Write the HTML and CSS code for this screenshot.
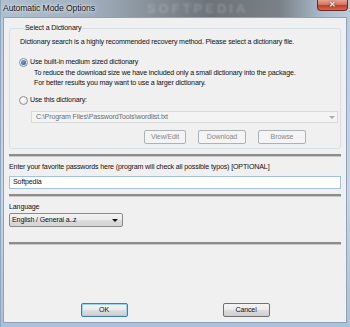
FILE: index.html
```html
<!DOCTYPE html>
<html lang="en">
<head>
  <meta charset="UTF-8" />
  <title>Automatic Mode Options</title>
  <link rel="stylesheet" href="styles.css">
</head>
<body>
  <div class="window">
    <div class="titlebar">
      <span class="title">Automatic Mode Options</span>
      <span class="watermark">SOFTPEDIA</span>
      <button class="close">&#x2715;</button>
    </div>

    <div class="client">
      <fieldset class="group">
        <legend>Select a Dictionary</legend>
        <p class="desc">Dictionary search is a highly recommended recovery method. Please select a dictionary file.</p>

        <label class="radio"><span class="dot checked"></span>Use built-in medium sized dictionary</label>
        <p class="note">To reduce the download size we have included only a small dictionary into the package.<br>For better results you may want to use a larger dictionary.</p>

        <label class="radio second"><span class="dot"></span>Use this dictionary:</label>
        <div class="combo">
          <span>C:\Program Files\PasswordTools\wordlist.txt</span>
          <span class="arrow small"></span>
        </div>

        <div class="btnrow">
          <button class="btn narrow" disabled>View/Edit</button>
          <button class="btn" disabled>Download</button>
          <button class="btn" disabled>Browse</button>
        </div>
      </fieldset>

      <hr class="sep">

      <p class="label">Enter your favorite passwords here (program will check all possible typos) [OPTIONAL]</p>
      <div class="textbox">Softpedia</div>

      <hr class="sep">

      <p class="label">Language</p>
      <div class="dropdown">
        <span>English / General a..z</span>
        <span class="arrow"></span>
      </div>

      <hr class="sep">

      <div class="footer">
        <button class="btn default">OK</button>
        <button class="btn">Cancel</button>
      </div>
    </div>
  </div>
</body>
</html>
```

FILE: styles.css
```css
* { box-sizing: border-box; }

body {
  margin: 0;
  width: 350px;
  height: 327px;
  overflow: hidden;
  font-family: 'Liberation Sans', Arial, sans-serif;
  font-size: 7.1px;
  letter-spacing: -0.15px;
  color: #111;
}

.window {
  width: 350px;
  height: 327px;
  display: flex;
  flex-direction: column;
  background: linear-gradient(to bottom, #b7cbe0, #c4d6e9 60%, #a9c1da);
  border-left: 1px solid #8fa6bf;
}

/* title bar */
.titlebar {
  height: 17px;
  flex: none;
  display: flex;
  align-items: flex-start;
  background: linear-gradient(to right, #aebfd0 0%, #a2b0be 25%, #838c95 45%, #6c7278 60%, #7a8187 80%, #a9bccd 92%, #b9cbdc 100%);
}

.title {
  font-size: 8.6px;
  letter-spacing: -0.1px;
  color: #111;
  padding: 3px 0 0 2px;
  text-shadow: 0 0 4px rgba(255,255,255,0.9), 0 0 2px rgba(255,255,255,0.8);
}

.watermark {
  margin-left: 52px;
  font-size: 13px;
  font-weight: bold;
  letter-spacing: 3px;
  color: rgba(225,225,225,0.25);
  filter: blur(1.2px);
  padding-top: 1px;
}

.close {
  margin-left: auto;
  margin-right: 2px;
  width: 31px;
  height: 11px;
  padding: 0;
  border: 1px solid #6b2a20;
  border-top: none;
  border-radius: 0 0 4px 4px;
  background: linear-gradient(to bottom, #e9a393 0%, #d9735f 45%, #c2402b 55%, #d56a4f 100%);
  color: #fff;
  font-size: 8px;
  font-weight: bold;
  line-height: 10px;
  text-shadow: 0 0 2px #3a0a00;
}

/* client area */
.client {
  flex: 1;
  margin: 0 3px 4px 2px;
  background: #f0f0f0;
  border: 1px solid #8ea3b8;
  padding: 5px 5px 0;
  display: flex;
  flex-direction: column;
}

p { margin: 0; line-height: 10px; }

.group {
  margin: 0;
  padding: 4px 2px 4px 10px;
  border: 1px solid #d5dfe5;
  border-radius: 3px;
}

.group legend {
  padding: 0 1px;
  margin-left: 4px;
  line-height: 10px;
}

.radio {
  display: flex;
  align-items: center;
  height: 10px;
  margin-top: 10px;
  margin-left: -1px;
  gap: 2px;
}

.radio.second { margin-top: 7px; }

.dot {
  width: 9px;
  height: 9px;
  border-radius: 50%;
  border: 1px solid #8e9396;
  background: radial-gradient(circle at 40% 35%, #fff, #dcdcdc);
  display: flex;
  align-items: center;
  justify-content: center;
}

.dot.checked::after {
  content: "";
  width: 5px;
  height: 5px;
  border-radius: 50%;
  background: radial-gradient(circle at 40% 35%, #6aa6e0, #1b4f8f);
}

.note {
  margin-top: 1px;
  padding-left: 14px;
}

.combo {
  margin: 6px 0 0 11px;
  height: 12px;
  border: 1px solid #d9d9d9;
  background: #f4f4f4;
  color: #6d6d6d;
  display: flex;
  align-items: center;
  padding: 0 2px 0 4px;
}

.combo span:first-child { flex: 1; }

.arrow {
  width: 0;
  height: 0;
  border-left: 3px solid transparent;
  border-right: 3px solid transparent;
  border-top: 3px solid #111;
}

.arrow.small { border-top-color: #aaa; }

.btnrow {
  display: flex;
  justify-content: flex-end;
  gap: 12px;
  margin-top: 7px;
  padding-right: 32px;
}

.btn {
  width: 48px;
  height: 14px;
  padding: 0;
  font-family: inherit;
  font-size: 7.1px;
  letter-spacing: -0.15px;
  color: #111;
  border: 1px solid #707070;
  border-radius: 2px;
  background: linear-gradient(to bottom, #f4f4f4 0%, #ebebeb 50%, #dddddd 51%, #cfcfcf 100%);
}

.btn.narrow { width: 42px; }

.btn:disabled {
  color: #8a8a8a;
  border-color: #adb2b5;
  background: #f4f4f4;
}

.btn.default {
  border-color: #3c7fb1;
  box-shadow: inset 0 0 0 1px #9fd1f3;
}

.sep {
  margin: 5px 0 0;
  height: 3px;
  border: none;
  border-top: 2px solid #8c8c8c;
  border-bottom: 1px solid #c8c8c8;
}

.label { margin-top: 5px; }

.textbox {
  margin-top: 4px;
  height: 13px;
  border: 1px solid #a3c2e3;
  background: #fff;
  padding: 0 3px;
  line-height: 11px;
}

.dropdown {
  margin-top: 1px;
  width: 114px;
  height: 14px;
  border: 1px solid #8a8a8a;
  border-radius: 2px;
  background: linear-gradient(to bottom, #f3f3f3 0%, #ebebeb 50%, #dddddd 51%, #d3d3d3 100%);
  display: flex;
  align-items: center;
  padding: 0 4px 0 2px;
}

.dropdown span:first-child { flex: 1; }

.dropdown + .sep { margin-top: 15px; }

.footer {
  margin-top: auto;
  margin-bottom: 5px;
  display: flex;
  justify-content: center;
  gap: 95px;
}

.footer .btn { width: 47px; }
```
